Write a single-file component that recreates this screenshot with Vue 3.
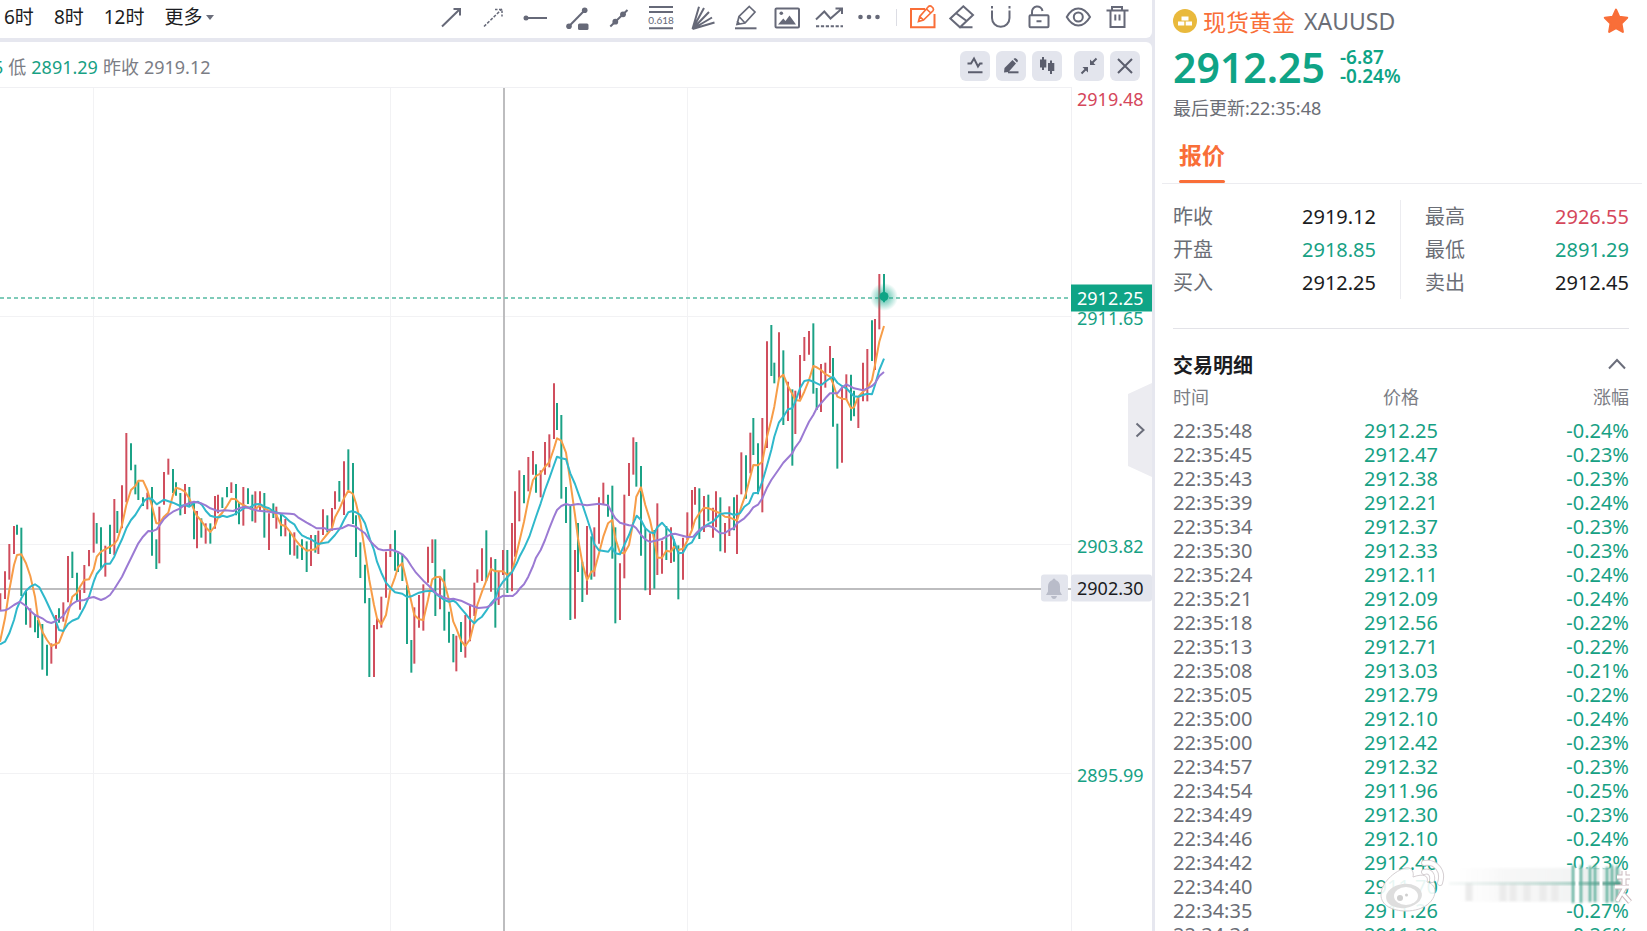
<script setup>
import { ref } from 'vue'

const drawTools = ['arrow', 'dashed', 'ray', 'segment', 'channel', 'fib', 'fan', 'marker', 'image', 'wave', 'more']
const editTools = ['edit', 'eraser', 'magnet', 'lock', 'eye', 'trash']
const toolNames = {
  arrow: '箭头', dashed: '虚线箭头', ray: '射线', segment: '线段', channel: '趋势线', fib: '黄金分割',
  fan: '扇形线', marker: '标记', image: '图片', wave: '波浪', more: '更多工具',
  edit: '编辑', eraser: '橡皮', magnet: '磁铁', lock: '锁定', eye: '显示', trash: '删除'
}
const frames = ['6时', '8时', '12时']

const topPrice = 2919.48
const priceSpan = 28.92
const at = (v) => ({ top: ((topPrice - v) / priceSpan) * 100 + '%' })
const levels = [2911.65, 2903.82, 2895.99]

// Each block: origin on the plot, then x/top/bottom in thirds of a unit; r rises, g falls.
const barBlocks = [
  [0, 312, `1 580 632 r,15 514 597 r,28 432 539 r,42 378 462 r,51 374 404 g,64 383 588 g,78 572 674 g,91 625 683 r,105 645 697 g,114 660 714 g,127 672 809 g,141 734 827 g,154 730 791 r,168 645 746 r,177 625 668 g,190 607 665 r,204 468 607 r,217 455 534 g,231 518 604 g,240 570 629 r,253 495 579 r,267 450 499 r,281 338 458 r,290 369 431 g,303 382 508 g,316 437 530 r,330 374 462 g,343 297 465 r,352 333 399 g,366 256 385 r,379 99 307 r,393 130 211 g,406 194 283 g,415 245 300 g,429 292 318 g,442 278 328 r,456 261 467 g,469 418 507 g,478 320 490 r,492 216 314 r,505 176 224 r,519 207 279 g,528 247 287 g,541 279 346 g,555 252 342 r,568 261 320 g,582 310 418 g,591 333 445 r,604 355 413 g,617 370 431 r,631 370 431 g,645 288 386 r,654 284 340 r,667 292 324 g,681 261 292 g,694 247 279 r,708 252 346 g,717 306 373 g,730 261 377 r,744 265 312 g,757 284 364 g,766 274 368 r,780 274 330 r,793 279 413 g,807 340 450 r,820 310 354 g,829 320 386 r,843 342 409 g,856 357 409 r,870 395 464 g,883 397 467 r,892 436 476 g`],
  [290, 282, `36 508 570 g,50 514 606 g,63 495 588 r,76 495 548 g,85 482 552 r,99 418 495 r,112 436 487 g,126 414 482 r,135 364 418 r,148 333 395 g,162 274 435 r,175 238 360 g,189 279 462 g,198 436 561 g,211 517 624 g,225 584 700 g,238 684 921 g,252 765 921 r,261 745 778 r,274 680 773 r,288 545 683 r,301 522 561 r,315 481 602 g,324 548 606 g,337 553 633 g,351 645 822 g,364 810 908 g,373 712 881 r,387 675 773 r,400 643 782 r,414 530 638 r,427 508 579 r,436 508 738 g,450 620 718 r,463 598 782 g,477 725 818 g,490 792 877 g,499 797 904 r,513 756 846 g,526 735 863 r,540 702 814 r,553 638 738 r,562 598 638 r,576 535 633 r,589 481 633 g,603 562 665 r,616 567 773 g,626 605 705 r,639 540 615 r,652 540 669 g,666 459 664 r,675 364 560 r,688 301 454 r,702 315 400 g,715 261 364 r,729 243 314 r,738 283 368 g,752 301 382 r,765 216 314 r,778 193 292 r,792 40 207 r,801 99 180 g,814 135 386 g`],
  [560, 282, `18 351 459 g,31 405 750 g,45 540 746 r,54 459 606 g,67 575 696 g,81 468 674 r,94 499 629 g,103 472 620 r,117 382 521 r,130 338 405 r,144 374 440 g,157 347 566 g,166 472 760 g,180 580 750 r,193 374 625 r,207 279 378 r,220 202 314 r,229 216 350 g,243 288 557 g,256 475 661 g,270 490 675 r,283 480 656 g,292 400 615 r,306 512 611 r,319 468 570 g,333 472 579 r,342 508 575 g,355 526 688 g,369 503 629 r,382 427 510 r,396 360 480 r,405 351 404 r,418 355 507 g,432 378 486 r,445 374 454 g,459 413 503 r,468 364 472 r,481 382 544 g,495 459 548 r,508 409 498 r,522 382 481 g,531 374 552 r,544 247 373 r,558 256 386 g`],
  [700, 162, `151 548 670 r,160 504 615 g,174 580 733 g,187 504 787 r,201 274 594 r,214 225 378 g,223 338 400 g,237 247 385 r,250 301 525 g,264 395 513 r,277 418 647 g,286 422 552 r,300 315 448 r,313 261 333 r,327 243 314 r,340 220 431 g,350 414 480 g,363 342 486 r,376 338 413 r,390 288 369 r,399 324 530 g,412 521 656 g,426 410 638 r,439 373 450 r,453 374 512 g,462 422 499 g,475 440 534 r,489 338 454 r,502 297 454 r,516 211 333 g,525 207 360 r,538 72 238 r,552 72 157 g`]
]
const bars = barBlocks.flatMap(([ox, oy, rows]) =>
  rows.split(',').map((row) => {
    const [x, a, b, k] = row.trim().split(' ')
    return { x: ox + x / 3, a: oy + a / 3, b: oy + b / 3, k }
  })
)

const lineBlocks = {
  ma5: [
    [0, 312, '0,725 15,655 28,570 42,495 51,465 64,463 78,490 91,528 105,590 114,655 127,695 141,720 154,738 168,732 177,728 190,695 204,640 217,590 231,578 240,560 253,540 267,538 281,508 290,470 303,455 316,448 330,440 343,432 352,420 366,375 379,315 393,270 406,258 415,242 429,242 442,270 456,318 469,370 478,370 492,350 505,338 519,285 528,263 541,267 555,275 568,295 582,330 591,348 604,362 617,382 631,396 645,378 654,352 667,338 681,318 694,296 708,298 717,308 730,315 744,322 757,328 766,328 780,315 793,325 807,332 820,335 829,345 843,374 856,378 870,395 883,415'],
    [290, 282, '30,526 50,542 63,540 76,538 85,528 99,508 112,492 126,475 135,442 148,418 162,385 175,362 189,372 198,400 211,455 225,545 238,630 252,705 261,745 274,763 288,735 301,660 315,622 324,592 337,580 351,640 364,695 373,735 387,748 400,750 414,690 427,628 436,622 450,620 463,638 477,690 490,755 499,775 513,812 526,828 540,808 553,755 562,705 576,665 589,632 603,597 616,604 626,604 639,604 652,615 666,605 675,570 688,515 702,455 715,390 729,330 738,318 752,310 765,290 778,277 792,235 801,205 814,212'],
    [560, 282, '18,248 31,335 45,435 54,505 67,578 81,630 94,605 103,602 117,550 130,500 144,460 157,450 166,505 180,548 193,550 207,525 220,455 229,380 243,352 256,405 270,450 283,510 292,563 306,563 319,542 333,545 342,530 355,540 369,536 382,512 396,480 405,450 418,430 432,413 445,415 459,420 468,425 481,430 495,440 508,442 522,448 531,452 544,410 558,370 571,320 580,285 594,286 607,275'],
    [700, 162, '201,560 214,510 223,470 237,385 250,374 264,408 277,432 286,450 300,452 313,425 327,390 340,348 350,352 363,360 376,372 390,380 399,400 412,440 426,446 439,448 453,475 462,472 475,440 489,425 502,415 516,390 525,345 538,275 552,228']
  ],
  ma10: [
    [0, 312, '0,733 15,725 28,700 42,660 51,625 64,595 78,572 91,560 105,553 118,562 135,595 154,635 168,665 177,690 190,693 204,672 217,662 235,655 253,622 267,590 281,545 290,522 303,506 316,491 330,491 343,470 352,448 366,418 379,385 393,360 406,345 420,322 435,300 445,295 456,297 470,313 492,299 519,308 541,318 555,315 568,320 582,308 594,305 606,315 617,332 631,347 645,351 658,352 668,347 681,351 700,345 720,333 735,323 750,322 765,313 780,312 793,320 807,325 820,334 843,342 856,352'],
    [290, 282, '0,455 13,463 24,482 36,496 50,503 63,508 85,522 100,519 115,517 135,495 150,475 162,450 175,427 185,424 198,427 211,435 225,460 240,508 252,540 261,575 274,608 288,638 301,653 315,667 337,671 351,681 364,679 387,668 405,664 427,662 445,677 463,690 477,695 490,692 499,698 513,715 526,730 540,748 553,760 562,750 576,740 589,722 603,700 616,685 626,655 639,635 652,622 666,607 680,580 690,557 702,535 718,500 738,440 752,400 765,360 778,325 792,285 801,260 814,265'],
    [560, 282, '18,268 31,310 45,342 55,370 67,403 81,445 94,485 103,522 117,541 145,545 155,530 166,550 180,553 193,525 207,495 220,460 230,437 243,450 256,475 270,487 283,490 292,472 306,458 319,473 333,487 342,512 355,550 369,548 382,525 396,517 405,500 418,485 432,470 445,462 459,455 468,445 481,432 495,430 510,430 522,435 540,430 553,410 567,400 580,370 594,368 607,335 620,290'],
    [700, 162, '214,600 223,560 237,517 250,500 264,478 277,475 286,455 300,415 313,393 327,390 340,395 363,406 376,395 390,385 399,380 412,398 426,408 439,415 453,430 462,439 475,440 489,435 502,431 516,433 525,405 538,360 552,326']
  ],
  ma20: [
    [0, 312, '0,632 15,631 28,625 42,615 60,605 78,618 91,632 105,645 127,655 141,665 154,669 168,663 190,648 204,625 217,612 231,603 253,600 267,594 281,591 303,600 316,595 330,585 343,567 366,530 379,503 393,475 415,430 429,410 445,393 456,394 470,388 492,357 505,345 519,335 541,325 555,314 568,310 582,305 604,310 617,316 631,325 654,333 675,331 700,333 717,325 735,320 755,327 775,332 807,335 829,339'],
    [290, 282, '0,431 13,433 24,442 50,458 63,465 80,475 105,475 112,480 135,477 155,475 175,465 198,470 211,480 225,490 240,513 252,525 265,537 280,541 305,539 324,546 337,553 351,568 364,588 378,608 400,632 414,645 427,658 440,672 463,683 477,688 490,686 513,692 540,705 565,714 590,712 603,705 616,690 640,677 668,678 680,668 690,655 702,643 715,620 729,588 738,563 752,540 765,510 778,475 792,440 801,420 814,408'],
    [560, 282, '18,402 31,406 54,402 81,406 117,401 144,406 157,430 166,445 180,458 193,462 207,466 220,467 229,475 243,495 256,508 270,516 292,511 306,507 319,500 333,493 345,491 382,501 400,500 410,488 425,473 445,467 459,472 468,480 481,490 495,489 508,480 522,474 531,460 553,445 567,430 580,412 594,404 607,385 620,355'],
    [700, 162, '214,690 237,657 250,638 277,610 286,592 300,573 313,545 327,515 340,495 350,475 363,460 376,445 390,430 412,430 426,413 439,403 453,410 462,415 489,421 502,415 516,408 525,400 538,378 552,366']
  ]
}
const averages = Object.entries(lineBlocks).map(([name, blocks]) => ({
  name,
  points: blocks
    .flatMap(([ox, oy, pts]) =>
      pts.split(' ').map((p) => {
        const [x, y] = p.split(',')
        return `${(ox + x / 3).toFixed(1)},${(oy + y / 3).toFixed(1)}`
      })
    )
    .join(' ')
}))

const stats = [
  [['昨收', '2919.12', ''], ['开盘', '2918.85', 'down'], ['买入', '2912.25', '']],
  [['最高', '2926.55', 'up'], ['最低', '2891.29', 'down'], ['卖出', '2912.45', '']]
]

const trades = ref([
  ['22:35:48', '2912.25', '-0.24%'],
  ['22:35:45', '2912.47', '-0.23%'],
  ['22:35:43', '2912.38', '-0.23%'],
  ['22:35:39', '2912.21', '-0.24%'],
  ['22:35:34', '2912.37', '-0.23%'],
  ['22:35:30', '2912.33', '-0.23%'],
  ['22:35:24', '2912.11', '-0.24%'],
  ['22:35:21', '2912.09', '-0.24%'],
  ['22:35:18', '2912.56', '-0.22%'],
  ['22:35:13', '2912.71', '-0.22%'],
  ['22:35:08', '2913.03', '-0.21%'],
  ['22:35:05', '2912.79', '-0.22%'],
  ['22:35:00', '2912.10', '-0.24%'],
  ['22:35:00', '2912.42', '-0.23%'],
  ['22:34:57', '2912.32', '-0.23%'],
  ['22:34:54', '2911.96', '-0.25%'],
  ['22:34:49', '2912.30', '-0.23%'],
  ['22:34:46', '2912.10', '-0.24%'],
  ['22:34:42', '2912.40', '-0.23%'],
  ['22:34:40', '2911.70', '-0.25%'],
  ['22:34:35', '2911.26', '-0.27%'],
  ['22:34:31', '2911.39', '-0.26%']
])
</script>

<template>
  <div class="app">
    <main class="left">
      <nav class="toolbar">
        <div class="frames">
          <button v-for="f in frames" :key="f" type="button">{{ f }}</button>
          <button type="button" class="more-frames">更多<svg width="8" height="5" viewBox="0 0 8 5"><path d="M0 0h8L4 5z" fill="#6b6e7b" /></svg></button>
        </div>
        <div class="tools">
          <button v-for="t in drawTools" :key="t" type="button" :aria-label="toolNames[t]">
            <svg class="ico" viewBox="0 0 24 24">
              <path v-if="t === 'arrow'" d="M3 21.5 21 4M14.5 4H21v6.5" />
              <g v-else-if="t === 'dashed'" class="thin"><path d="M3 21.500 21 4" stroke-dasharray="3 1.500" /><path d="M14 4.500h7v7" stroke-dasharray="2.500 1.500" /></g>
              <g v-else-if="t === 'ray'"><path d="M3 13h21" /><circle class="fill" cx="3" cy="13" r="2.500" /></g>
              <g v-else-if="t === 'segment'"><path d="M4 21.300 19.700 5.300" /><circle class="fill" cx="19.700" cy="5.300" r="2.800" /><circle class="fill" cx="4" cy="21.300" r="2.800" /><rect class="fill" x="13" y="18.500" width="10.500" height="6.500" rx="1.500" /></g>
              <g v-else-if="t === 'channel'"><path d="M3.300 21.500 20.500 5" /><circle class="fill" cx="16" cy="9.300" r="2.900" /><circle class="fill" cx="8.300" cy="16.700" r="2.900" /></g>
              <g v-else-if="t === 'fib'"><path d="M0 2h24M0 7h24M0 23.300h24" /><text x="12" y="19" text-anchor="middle" class="fib-text">0.618</text></g>
              <path v-else-if="t === 'fan'" d="M1.500 24 8 1.700M1.500 24 13 3M1.500 24 18 7M1.500 24 21 12.500M1.500 24 23.500 17.500" />
              <g v-else-if="t === 'marker'"><path class="mid" d="M16.300 1.500 22 7 12 18 4 19.500 6 11.500zM6 11.500 12 18M4 16l3 3.500" /><path d="M2 23.300h21.500" /></g>
              <g v-else-if="t === 'image'"><rect x="0.500" y="3.500" width="23.500" height="19" rx="1" /><circle class="fill" cx="6.300" cy="8.300" r="1.800" /><path class="fill" d="M3 19.500 8.300 13.500 10.500 16 14.500 10.500 21 19.500z" /></g>
              <g v-else-if="t === 'wave'"><path d="M-1 14.500 7.300 6.500 13.500 13.500 25 3.500M18.500 3.500H25V9" /><path d="M-1 21.300h27" stroke-dasharray="3.200 1.700" /></g>
              <g v-else><circle class="fill" cx="1.500" cy="12" r="2.300" /><circle class="fill" cx="10" cy="12" r="2.300" /><circle class="fill" cx="18.500" cy="12" r="2.300" /></g>
            </svg>
          </button>
        </div>
        <span class="sep"></span>
        <div class="tools edit-tools">
          <button v-for="t in editTools" :key="t" type="button" :aria-label="toolNames[t]">
            <svg class="ico" :class="{ active: t === 'edit' }" viewBox="0 0 24 24">
              <g v-if="t === 'edit'"><path d="M15 4H1V22.300H24.500V9" /><path class="mid" d="M8.500 16.500 9.800 11.500 18.500 1.500Q20 .2 21.500 1.500L23 3Q24 4.500 23 5.800L13.500 15zM16.500 4 20.800 8M9.800 11.500 13.500 15" /></g>
              <g v-else-if="t === 'eraser'"><path d="M14.300 1.300 24 10 11 22.300 1.300 13.500zM7.500 8.500 18 16.300M11 22.300h12.500" /></g>
              <path v-else-if="t === 'magnet'" d="M4 1v2.500M21.500 1v2.500M4 5.500v7.500a8.700 8.700 0 0 0 17.500 0V5.500" />
              <g v-else-if="t === 'lock'"><rect x="2.500" y="10.300" width="19" height="12" rx="1" /><path d="M5 10V7.500a5.300 5.300 0 0 1 10.500-1.500M9.500 16.300h5" /></g>
              <g v-else-if="t === 'eye'"><path d="M.8 12Q5.500 3.500 12.300 3.500T24 12Q19 20.500 12.300 20.500T.8 12z" /><circle cx="12.300" cy="12" r="4.500" /></g>
              <path v-else d="M1.500 5.500h22M7 5V2h10v3M5.500 5.500V22h14V5.500M10.300 9.500v6M14.500 9.500v6" />
            </svg>
          </button>
        </div>
      </nav>

      <section class="chart">
        <header class="chart-head">
          <p class="ohlc"><b class="down">5</b><span>低</span><b class="down">2891.29</b><span class="prev">昨收</span><b>2919.12</b></p>
          <div class="chart-btns">
            <button type="button" aria-label="指标"><svg class="ico30" viewBox="0 0 30 30"><path d="M7.500 12.500H11L14 7.500 18 15.500 20 12.500h2.500M8 21.300h14.500" /></svg></button>
            <button type="button" aria-label="画线"><svg class="ico30" viewBox="0 0 30 30"><path class="fill" d="M8 21.500 8.500 17 16.500 9 20 12.500 12.500 21zM17.500 8 19 7Q22 8 22 10L21 11.500z" /><path d="M12 21.300h10.500" /></svg></button>
            <button type="button" aria-label="K线"><svg class="ico30" viewBox="0 0 30 30"><path d="M11 6v13M19 9.500V23" /><path class="fill" d="M8 8.500h6.300V16.500H8zM16 12h6.300v8H16z" /></svg></button>
            <button type="button" class="apart" aria-label="缩小"><svg class="ico30" viewBox="0 0 30 30"><path d="M22.500 7.500 17 13M7.500 22.500 13 17" /><path class="fill" d="M16 8.500V14h5.500zM14 21.500V16H8.500z" /></svg></button>
            <button type="button" aria-label="关闭"><svg class="ico30" viewBox="0 0 30 30"><path d="M8 8 22 22M22 8 8 22" /></svg></button>
          </div>
        </header>

        <div class="chart-body">
          <div class="plot">
            <svg viewBox="0 0 1071 843" preserveAspectRatio="none">
              <defs>
                <radialGradient id="glow"><stop offset="0" stop-color="#12a88a" stop-opacity=".75" /><stop offset=".5" stop-color="#12a88a" stop-opacity=".4" /><stop offset="1" stop-color="#12a88a" stop-opacity="0" /></radialGradient>
              </defs>
              <path class="grid" d="M93.500 0V843M390.500 0V843M687.500 0V843M0 228.500H1071M0 456.500H1071M0 685.500H1071" />
              <path class="cross" d="M504 0V843M0 501H1071" />
              <path class="now" d="M0 210H1071" />
              <line v-for="b in bars" :key="b.x" :class="['bar', b.k]" :x1="b.x" :x2="b.x" :y1="b.a" :y2="b.b" />
              <polyline v-for="m in averages" :key="m.name" :class="m.name" :points="m.points" />
              <circle cx="884" cy="209" r="14" fill="url(#glow)" />
              <circle cx="884" cy="208.500" r="4.500" fill="#0fa486" />
            </svg>
          </div>
          <div class="axis">
            <span class="level first">{{ topPrice }}</span>
            <span v-for="l in levels" :key="l" class="level tick" :style="at(l)">{{ l.toFixed(2) }}</span>
            <span class="level now-tag" :style="at(2912.25)">2912.25</span>
            <span class="level cross-tag" :style="at(2902.3)">2902.30</span>
            <button type="button" class="bell" aria-label="价格提醒" :style="at(2902.3)">
              <svg viewBox="0 0 27 27"><path d="M13 4c1 0 1.500.8 1.500 1.500 3 1 4.500 3.500 4.500 6.500v5l2 3.500H5l2-3.500v-5c0-3 1.500-5.500 4.500-6.500 0-.7.500-1.500 1.500-1.500zM10 21.500h6c-.5 2-1.500 3-3 3s-2.500-1-3-3z" fill="#b9bcc9" /></svg>
            </button>
          </div>
          <button type="button" class="collapse" aria-label="收起">
            <svg viewBox="0 0 24 94"><path d="M24 0 0 11V83L24 94z" fill="#ececf1" /><path d="M8.500 40.500 15.500 47 8.500 53.500" fill="none" stroke="#6b6e7b" stroke-width="2" /></svg>
          </button>
        </div>
      </section>
    </main>

    <aside class="panel">
      <header class="symbol">
        <svg class="coin" viewBox="0 0 24 24"><circle cx="12" cy="12" r="12" fill="#e9b93c" /><path d="M8.500 7.500h7v4h-7zM5 12.500h6.300v4H5zM12.700 12.500H19v4h-6.300z" fill="#fff" /></svg>
        <h1>现货黄金</h1>
        <span class="code">XAUUSD</span>
        <button type="button" class="star" aria-label="收藏"><svg viewBox="0 0 24 24"><path d="M12 1.500 15 8.200 22.300 9 17 14.200 18.300 22 12 18.500 5.700 22 7 14.200 1.700 9 9 8.200z" fill="#f96e38" stroke="#f96e38" stroke-width="2" stroke-linejoin="round" /></svg></button>
      </header>
      <div class="quote">
        <strong>2912.25</strong>
        <div class="delta"><span>-6.87</span><span>-0.24%</span></div>
      </div>
      <p class="updated">最后更新:22:35:48</p>
      <div class="tabs"><button type="button" class="tab">报价</button></div>

      <div class="stats">
        <dl v-for="(col, i) in stats" :key="i">
          <div v-for="s in col" :key="s[0]"><dt>{{ s[0] }}</dt><dd :class="s[2]">{{ s[1] }}</dd></div>
        </dl>
      </div>

      <section class="trades">
        <div class="trades-head">
          <h2>交易明细</h2>
          <button type="button" aria-label="折叠"><svg viewBox="0 0 18 12"><path d="M1 10.500 9 2l8 8.500" fill="none" stroke="#6b6e7b" stroke-width="2" /></svg></button>
        </div>
        <table>
          <thead><tr><th>时间</th><th>价格</th><th>涨幅</th></tr></thead>
          <tbody>
            <tr v-for="(t, i) in trades" :key="i"><td>{{ t[0] }}</td><td>{{ t[1] }}</td><td>{{ t[2] }}</td></tr>
          </tbody>
        </table>
      </section>

      <div class="mark">
        <svg class="weibo" viewBox="0 0 66 54">
          <path d="M30 9C24 7 2 20 2 36c0 10 11 16 25 16 18 0 29-10 29-20 0-5-4-8-8-9 2-6-3-9-14-5 1-5-1-8-4-9z" fill="#fff" fill-opacity=".9" stroke="#d5cfd2" />
          <ellipse cx="25" cy="37" rx="18" ry="12" fill="#dedede" transform="rotate(-7 25 37)" />
          <ellipse cx="27" cy="37" rx="12" ry="9" fill="#fff" /><circle cx="21" cy="39" r="3" fill="#cfcfcf" /><circle cx="27.500" cy="36" r="1.500" fill="#cfcfcf" />
          <g fill="none" stroke-linecap="round"><path d="M45 4c12-2 20 8 16 20M45 13c6-2 9 3 8 8" stroke="#d5cfd2" stroke-width="6" /><path d="M45 4c12-2 20 8 16 20M45 13c6-2 9 3 8 8" stroke="#fff" stroke-width="4" /></g>
        </svg>
        <svg class="smear" viewBox="0 0 186 46" preserveAspectRatio="none">
          <defs>
            <linearGradient id="fade"><stop offset="0" stop-color="#fff" stop-opacity=".4" /><stop offset=".3" stop-color="#f8f8f8" /><stop offset=".7" stop-color="#f3f4f4" /><stop offset="1" stop-color="#e2e9e7" /></linearGradient>
            <linearGradient id="streak"><stop offset="0" stop-color="#dfe9e6" stop-opacity=".3" /><stop offset=".7" stop-color="#a9cfc5" /><stop offset="1" stop-color="#3f8573" /></linearGradient>
            <filter id="soft" x="-10" y="-1" width="190" height="3" filterUnits="objectBoundingBox"><feGaussianBlur stdDeviation="2" /></filter>
            <filter id="soft2"><feGaussianBlur stdDeviation="0.8" /></filter>
          </defs>
          <rect x="2" y="5" width="172" height="34" fill="url(#fade)" filter="url(#soft2)" />
          <path d="M22 20v18M56 20v18M66 20v18M80 20v18M96 20v18M108 20v18" stroke="#ebebeb" stroke-width="7" filter="url(#soft2)" />
          <rect x="2" y="19" width="172" height="3" fill="url(#streak)" filter="url(#soft2)" />
          <path d="M126 2v38M134 2v38M143 3v36M148 2v37M160 4v36M165 2v37M170 3v36" stroke="#49a891" stroke-width="2" filter="url(#soft2)" />
          <path d="M130 5v34M154 4v36" stroke="#fff" stroke-width="3" />
          <path d="M170 14h13M177 8v14M168 24h14M178 24 170 38M176 31l7 8" fill="none" stroke="#cbb9be" stroke-width="5" /><path d="M170 14h13M177 8v14M168 24h14M178 24 170 38M176 31l7 8" fill="none" stroke="#fff" stroke-width="3" />
        </svg>
      </div>
    </aside>
  </div>
</template>

<style>
body {
  background: #e6e7ef;
}
</style>

<style scoped>
.app {
  display: grid;
  grid-template-columns: minmax(0, 1fr) 492px;
  gap: 3px;
  height: 100vh;
  overflow: hidden;
  font-family: "Noto Sans", "Noto Sans CJK SC", sans-serif;
  color: #6b6e76;
}
button {
  padding: 0;
  border: 0;
  background: none;
  font: inherit;
  color: inherit;
  cursor: pointer;
}
svg {
  display: block;
}
h1, h2, p, dl, dd {
  margin: 0;
}
.left {
  display: flex;
  flex-direction: column;
  gap: 4px;
  min-width: 0;
}
.toolbar {
  display: flex;
  align-items: center;
  height: 38px;
  padding: 0 23px 4px 4px;
  box-sizing: border-box;
  background: #fff;
  border-radius: 0 0 6px 0;
}
.frames {
  display: flex;
  gap: 20px;
  margin-right: auto;
  font-size: 19px;
  line-height: 24px;
  color: #1b1c22;
}
.more-frames {
  display: flex;
  align-items: center;
  gap: 3px;
}
.tools {
  display: flex;
  gap: 18px;
}
.edit-tools {
  gap: 15px;
}
.sep {
  width: 1px;
  height: 17px;
  margin: 0 13px;
  background: #dcdde4;
}
.ico {
  width: 24px;
  height: 24px;
  overflow: visible;
  fill: none;
  stroke: #666978;
  stroke-width: 2;
}
.ico .thin {
  stroke-width: 1.5;
}
.ico .mid {
  stroke-width: 1.7;
}
.ico .fill {
  fill: #666978;
  stroke: none;
}
.ico.active {
  stroke: #f96e38;
}
.fib-text {
  fill: #666978;
  stroke: none;
  font-family: Lato, sans-serif;
  font-size: 10px;
}
.chart {
  display: flex;
  flex: 1;
  flex-direction: column;
  min-height: 0;
  background: #fff;
  border-radius: 0 6px 0 0;
}
.chart-head {
  display: flex;
  align-items: center;
  justify-content: space-between;
  height: 45px;
  padding: 3px 12px 0 0;
  box-sizing: border-box;
  overflow: hidden;
}
.ohlc {
  display: flex;
  gap: 5px;
  margin-left: -7px;
  padding-top: 2px;
  font-size: 18px;
  line-height: 24px;
  color: #7b7d85;
}
.ohlc b {
  font-weight: 400;
}
.chart-btns {
  display: flex;
  gap: 6px;
}
.chart-btns button {
  width: 30px;
  height: 30px;
  border-radius: 6px;
  background: #e3e5ed;
}
.chart-btns .apart {
  margin-left: 6px;
}
.ico30 {
  fill: none;
  stroke: #5b5e6d;
  stroke-width: 2;
}
.ico30 .fill {
  fill: #5b5e6d;
  stroke: none;
}
.chart-body {
  position: relative;
  display: grid;
  grid-template-columns: minmax(0, 1fr) 80px;
  flex: 1;
  min-height: 0;
}
.plot {
  min-height: 0;
  overflow: hidden;
  border-top: 1px solid #f0f0f3;
  border-right: 1px solid #f0f0f3;
}
.plot svg {
  width: 100%;
  height: 100%;
}
.plot path, .plot line, .plot polyline {
  fill: none;
  vector-effect: non-scaling-stroke;
}
.grid {
  stroke: #f2f2f4;
}
.cross {
  stroke: #bdbdbf;
  stroke-width: 2;
}
.now {
  stroke: #7fcbb9;
  stroke-width: 2;
  stroke-dasharray: 4 3;
}
.bar {
  stroke-width: 2;
}
.bar.r {
  stroke: #d04e5d;
}
.bar.g {
  stroke: #1ba286;
}
.ma5, .ma10, .ma20 {
  stroke-width: 2;
  stroke-linejoin: round;
}
.ma5 {
  stroke: #f79d48;
}
.ma10 {
  stroke: #2fb8cb;
}
.ma20 {
  stroke: #9b7ad3;
}
.axis {
  position: relative;
}
.level {
  position: absolute;
  left: 0;
  right: 0;
  padding-left: 5px;
  transform: translateY(-50%);
  font-size: 18px;
  line-height: 27px;
  color: #17a184;
}
.tick {
  padding-top: 4px;
}
.first {
  top: 0;
  transform: none;
  line-height: 24px;
  color: #d5475b;
}
.now-tag, .cross-tag {
  left: -1px;
  padding-left: 6px;
}
.now-tag {
  background: #0fa486;
  color: #fff;
}
.cross-tag {
  background: #e3e5ed;
  border-radius: 3px;
  color: #1b1c22;
}
.bell {
  position: absolute;
  left: -31px;
  width: 27px;
  height: 27px;
  transform: translateY(-50%);
  border-radius: 3px;
  background: #e3e5ed;
}
.collapse {
  position: absolute;
  top: 296px;
  right: 0;
  width: 24px;
  height: 94px;
}
.panel {
  position: relative;
  padding: 4px 18px 0;
  overflow: hidden;
  background: #fff;
}
.symbol {
  display: flex;
  align-items: center;
  height: 34px;
  font-size: 23px;
}
.coin {
  width: 24px;
  height: 24px;
  margin-right: 6px;
}
.symbol h1 {
  font-size: 23px;
  font-weight: 400;
  color: #f96e38;
}
.code {
  margin-left: 9px;
}
.star {
  width: 26px;
  height: 26px;
  margin-left: auto;
}
.quote {
  display: flex;
  align-items: center;
  gap: 15px;
  height: 57px;
  color: #0fa486;
}
.quote strong {
  font-size: 41px;
  font-weight: 600;
}
.delta {
  display: flex;
  flex-direction: column;
  font-size: 19px;
  font-weight: 600;
  line-height: 19px;
}
.updated {
  padding-top: 1px;
  font-size: 18px;
  line-height: 24px;
}
.tabs {
  margin: 13px -13px 0 -11px;
  padding-left: 17px;
  border-bottom: 1px solid #ececf0;
}
.tab {
  position: relative;
  height: 50px;
  padding-bottom: 8px;
  font-size: 23px;
  font-weight: 700;
  color: #f96e38;
}
.tab::after {
  content: "";
  position: absolute;
  inset: auto 0 0;
  height: 3px;
  border-radius: 2px;
  background: #f96e38;
}
.stats {
  display: grid;
  grid-template-columns: 1fr 1fr;
  padding: 16px 0 29px;
  border-bottom: 1px solid #e3e3e8;
}
.stats dl {
  padding-right: 24px;
  border-right: 1px solid #ececf0;
}
.stats dl + dl {
  padding: 0 0 0 24px;
  border: 0;
}
.stats dl div {
  display: flex;
  justify-content: space-between;
  font-size: 20px;
  line-height: 33px;
}
.stats dd {
  color: #1b1c22;
}
.stats .up {
  color: #d5475b;
}
.down, .stats .down {
  color: #17a184;
}
.trades-head {
  display: flex;
  align-items: center;
  justify-content: space-between;
  height: 40px;
  padding: 15px 3px 1px 0;
}
.trades-head h2 {
  font-size: 20px;
  font-weight: 700;
  color: #1b1c22;
}
.trades-head button {
  width: 18px;
}
table {
  width: 100%;
  border-collapse: collapse;
  table-layout: fixed;
}
th, td {
  padding: 0;
  text-align: center;
  font-size: 20px;
  font-weight: 400;
  line-height: 24px;
}
th {
  padding-bottom: 10px;
  font-size: 18px;
  color: #7b7d85;
}
td {
  color: #17a184;
}
th:first-child, td:first-child {
  text-align: left;
}
td:first-child {
  color: #6b6e76;
}
th:last-child, td:last-child {
  text-align: right;
}
.mark {
  position: absolute;
  right: 14px;
  bottom: 18px;
  display: flex;
  align-items: center;
  gap: 2px;
  pointer-events: none;
}
.weibo {
  width: 66px;
  height: 54px;
}
.smear {
  width: 186px;
  height: 46px;
}
</style>
